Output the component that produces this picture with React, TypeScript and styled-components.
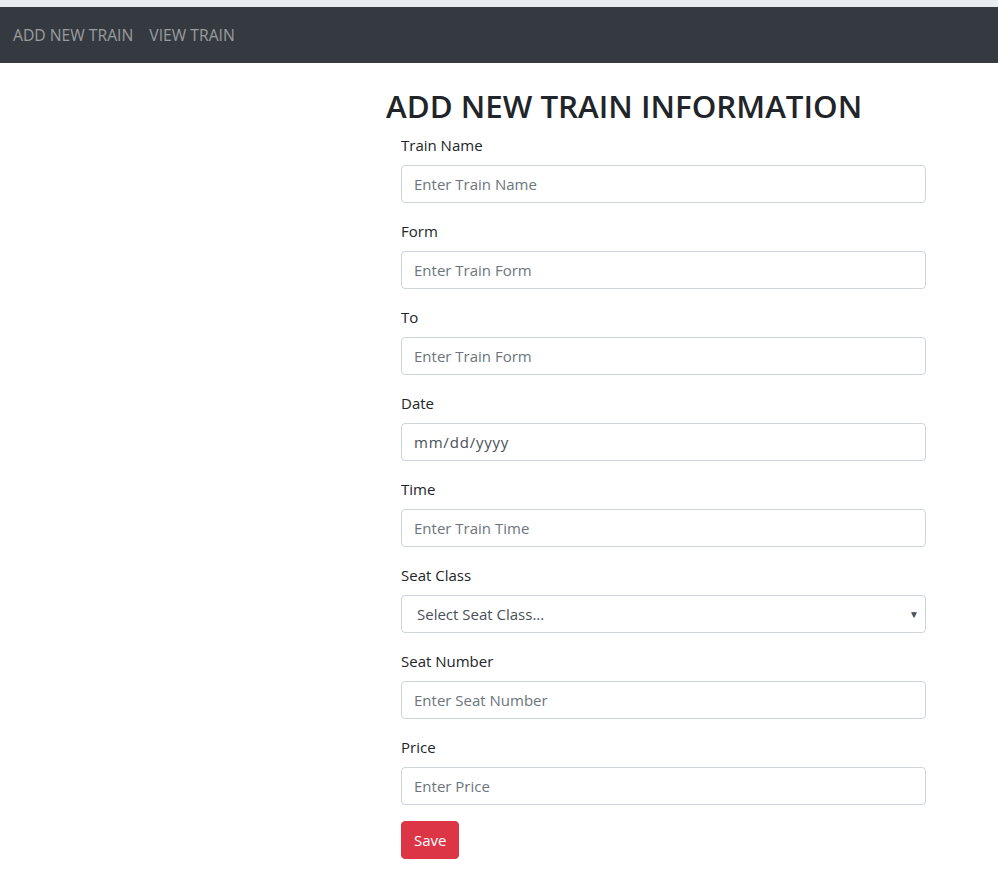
import styled, { createGlobalStyle } from "styled-components";

const GlobalStyle = createGlobalStyle`
  * {
    box-sizing: border-box;
  }
  body {
    margin: 0;
    background: #fff;
    color: #212529;
    font-family: "Open Sans", "Liberation Sans", sans-serif;
    font-size: 16px;
    line-height: 1.5;
  }
`;

const TopStrip = styled.div`
  height: 7px;
  background: #e9ecef;
`;

const NavBar = styled.nav`
  display: flex;
  align-items: center;
  height: 56px;
  padding: 2px 5px 0;
  background: #343a40;
`;

const NavLink = styled.a`
  padding: 8px;
  color: rgba(255, 255, 255, 0.5);
  font-size: 15.7px;
  text-decoration: none;
  cursor: pointer;
`;

const Main = styled.main`
  display: flex;
  padding-left: 386px;
`;

const Content = styled.div`
  width: 555px;
`;

const Heading = styled.h2`
  margin: 24px 0 8px;
  font-size: 31.3px;
  font-weight: 600;
  line-height: 38px;
`;

const Form = styled.form`
  padding: 0 15px 40px;
`;

const Group = styled.div`
  margin-bottom: 16px;
`;

const Label = styled.label`
  display: block;
  margin-bottom: 8px;
  font-size: 15px;
  line-height: 24px;
`;

const Input = styled.input<{ $dark?: boolean }>`
  display: block;
  width: 100%;
  height: 38px;
  padding: 6px 12px;
  border: 1px solid #ced4da;
  border-radius: 4px;
  font-family: inherit;
  font-size: 15px;
  color: #495057;
  background: #fff;
  letter-spacing: ${(p) => (p.$dark ? "0.8px" : "0")};
  &::placeholder {
    color: ${(p) => (p.$dark ? "#495057" : "#6c757d")};
  }
`;

const SelectWrap = styled.div`
  position: relative;
`;

const Select = styled.select`
  display: block;
  width: 100%;
  height: 38px;
  padding: 6px 24px 6px 15px;
  border: 1px solid #ced4da;
  border-radius: 4px;
  font-family: inherit;
  font-size: 15px;
  color: #495057;
  background: #fff;
  appearance: none;
`;

const Caret = styled.span`
  position: absolute;
  right: 7px;
  top: 50%;
  transform: translateY(-50%);
  font-size: 10px;
  color: #495057;
  pointer-events: none;
`;

const SaveButton = styled.button`
  height: 38px;
  padding: 0 12px;
  border: 1px solid #dc3545;
  border-radius: 4px;
  background: #dc3545;
  color: #fff;
  font-family: inherit;
  font-size: 15px;
  cursor: pointer;
`;

const textFields = [
  { label: "Train Name", placeholder: "Enter Train Name" },
  { label: "Form", placeholder: "Enter Train Form" },
  { label: "To", placeholder: "Enter Train Form" },
  { label: "Date", placeholder: "mm/dd/yyyy", dark: true },
  { label: "Time", placeholder: "Enter Train Time" },
];

const lastFields = [
  { label: "Seat Number", placeholder: "Enter Seat Number" },
  { label: "Price", placeholder: "Enter Price" },
];

export default function App() {
  return (
    <>
      <GlobalStyle />
      <TopStrip />
      <NavBar>
        <NavLink>ADD NEW TRAIN</NavLink>
        <NavLink>VIEW TRAIN</NavLink>
      </NavBar>
      <Main>
        <Content>
          <Heading>ADD NEW TRAIN INFORMATION</Heading>
          <Form onSubmit={(e) => e.preventDefault()}>
            {textFields.map((f) => (
              <Group key={f.label}>
                <Label>{f.label}</Label>
                <Input placeholder={f.placeholder} $dark={f.dark} />
              </Group>
            ))}
            <Group>
              <Label>Seat Class</Label>
              <SelectWrap>
                <Select defaultValue="">
                  <option value="" disabled>
                    Select Seat Class...
                  </option>
                  <option>First Class</option>
                  <option>Second Class</option>
                  <option>Third Class</option>
                </Select>
                <Caret>▼</Caret>
              </SelectWrap>
            </Group>
            {lastFields.map((f) => (
              <Group key={f.label}>
                <Label>{f.label}</Label>
                <Input placeholder={f.placeholder} />
              </Group>
            ))}
            <SaveButton type="submit">Save</SaveButton>
          </Form>
        </Content>
      </Main>
    </>
  );
}
